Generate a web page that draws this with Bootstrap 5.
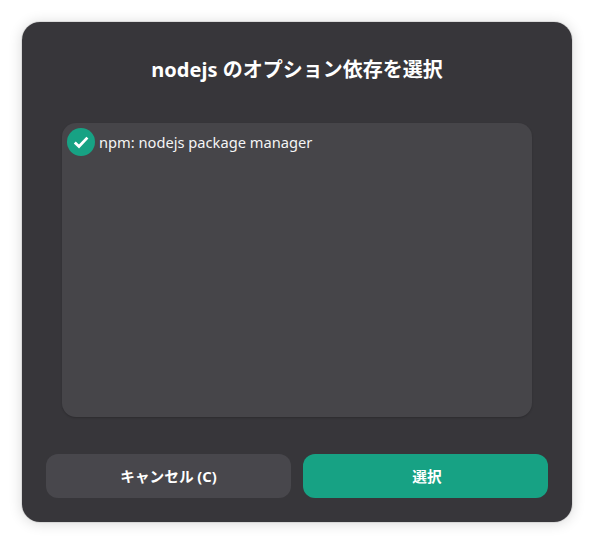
<!DOCTYPE html>
<html lang="ja">
<head>
<meta charset="utf-8">
<title>nodejs</title>
<link href="https://cdn.jsdelivr.net/npm/bootstrap@5.3.0/dist/css/bootstrap.min.css" rel="stylesheet">
<style>
html, body { height: 100%; }
body { background: #fff; margin: 0; padding: 22px; font-family: "Noto Sans", "Noto Sans CJK JP", sans-serif; color: #fff; }
.dlg { width: 550px; height: 500px; background: #37363a; border-radius: 18px; box-shadow: 0 1px 14px rgba(0,0,0,.16); padding: 0 24px 24px; outline: 1px solid rgba(0,0,0,.08); }
.dlg-title { font-size: 20px; font-weight: 700; line-height: 28px; margin: 34px 0 39px; text-align: center; color: #fff; }
.pick-box { width: 470px; height: 294px; margin: 0 auto 37px; background: #464549; border-radius: 14px; padding: 5px; box-shadow: 0 1px 2px rgba(0,0,0,.2); }
.pick-tick { width: 28px; height: 28px; border-radius: 50%; background: #17a284; flex: none; }
.pick-text { font-size: 14.67px; line-height: 28px; margin-left: 4px; color: #f4f4f5; }
.dlg-btn { height: 44px; border: 0; border-radius: 12px; font-size: 14.67px; font-weight: 700; color: #fff; padding: 0; font-family: inherit; }
.dlg-btn.b-cancel, .dlg-btn.b-cancel:hover { background: #48474c; color: #fff; }
.dlg-btn.b-ok, .dlg-btn.b-ok:hover { background: #17a284; color: #fff; padding-left: 3px; }
.dlg-row { display: grid; grid-template-columns: 1fr 1fr; gap: 12px; }
</style>
</head>
<body>
<div class="dlg d-flex flex-column">
  <h1 class="dlg-title">nodejs のオプション依存を選択</h1>
  <div class="pick-box">
    <div class="d-flex align-items-center">
      <span class="pick-tick d-flex align-items-center justify-content-center">
        <svg width="16" height="14" viewBox="0 0 16 14" aria-hidden="true"><path d="M1.8 7.4 L6 11.4 L14.4 2.6" fill="none" stroke="#fff" stroke-width="2.8"/></svg>
      </span>
      <span class="pick-text">npm: nodejs package manager</span>
    </div>
  </div>
  <div class="dlg-row">
    <button type="button" class="btn dlg-btn b-cancel">キャンセル (C)</button>
    <button type="button" class="btn dlg-btn b-ok">選択</button>
  </div>
</div>
<script src="https://cdn.jsdelivr.net/npm/bootstrap@5.3.0/dist/js/bootstrap.bundle.min.js"></script>
</body>
</html>
